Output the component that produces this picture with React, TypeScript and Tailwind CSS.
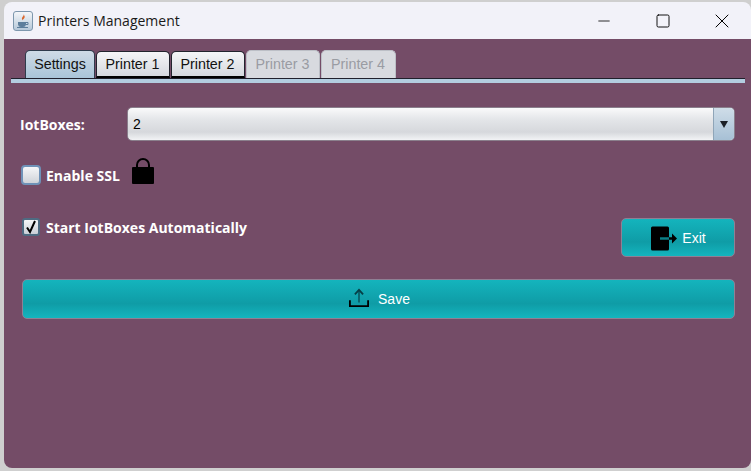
import { X, Minus, Square } from 'lucide-react';

const tabs = ['Printer 1', 'Printer 2'];
const disabledTabs = ['Printer 3', 'Printer 4'];
const tealButton =
  'flex items-center justify-center rounded-[5px] border border-[#8f8094] bg-[linear-gradient(#14b4bd_0%,#0f9ca6_62%,#14b5be_100%)] font-["Liberation_Sans",sans-serif] text-[14px] text-white';
const labelText = 'font-["Open_Sans",sans-serif] text-[14px] font-bold text-white';

function JavaIcon() {
  return (
    <div className="flex h-[20px] w-[20px] items-center justify-center rounded-[3px] border border-[#7d97ad] bg-[linear-gradient(#f4f6f9,#b6c8d9)]">
      <svg width="14" height="16" viewBox="0 0 14 16">
        <path d="M7.500 1c1 2-2 3-1.500 5 .2.8 1 1.300 1 1.300-.3-1.300 2.500-2.300 1.500-4.300" fill="#d9662b" />
        <path d="M2 9h8v2.500a3 3 0 0 1-3 2.500H5a3 3 0 0 1-3-2.500z" fill="#5d7e9c" />
        <path d="M10 9.500h2v2h-2M1 14.500h11" fill="none" stroke="#5d7e9c" />
      </svg>
    </div>
  );
}

function LockIcon() {
  return (
    <svg width="24" height="27" viewBox="0 0 24 27">
      <path d="M6 12V7a6 6 0 0 1 12 0v5" fill="none" stroke="#000" strokeWidth="2" />
      <rect x="1" y="9" width="22" height="17" rx="1" fill="#000" />
    </svg>
  );
}

function ExitIcon() {
  return (
    <svg width="29" height="25" viewBox="0 0 29 25">
      <rect x="1" y="0.500" width="18" height="24" rx="1.500" fill="#000" />
      <path d="M10 12.500h9" stroke="#0b7f86" strokeWidth="2.500" />
      <path d="M19 12.500h6" stroke="#000" strokeWidth="2.500" />
      <path d="M22 7.500l5 5-5 5z" fill="#000" />
    </svg>
  );
}

function UploadIcon() {
  return (
    <svg width="20" height="20" viewBox="0 0 22 22">
      <path d="M1 13.500v6.500h20v-6.500" fill="none" stroke="#000" strokeWidth="2" />
      <path d="M11 16V3" stroke="#0a5f68" strokeWidth="2" />
      <path d="M6.500 7L11 2l4.500 5" fill="none" stroke="#063f46" strokeWidth="2" />
    </svg>
  );
}

export default function App() {
  return (
    <div className="flex h-[471px] w-[751px] flex-col overflow-hidden bg-[#cfcfcf] pb-[3px] pl-[4px] pt-[2px]">
      <div className="flex min-h-0 flex-1 flex-col overflow-hidden rounded-[8px]">
        {/* title bar */}
        <div className="flex h-[37px] shrink-0 items-center bg-[#f2f2f9] pl-[9px]">
          <JavaIcon />
          <span className='ml-[5px] font-["Open_Sans",sans-serif] text-[14px] text-[#1a1a1a]'>Printers Management</span>
          <div className="ml-auto flex items-center text-black">
            <div className="flex w-[59px] justify-center"><Minus size={18} strokeWidth={1.100} /></div>
            <div className="flex w-[59px] justify-center"><Square size={16} strokeWidth={1.400} /></div>
            <div className="flex w-[59px] justify-center"><X size={24} strokeWidth={1} /></div>
          </div>
        </div>

        <div className="flex min-h-0 flex-1 flex-col bg-[#744c67] pr-[6px]">
          {/* tabs */}
          <div className="ml-[7px] mt-[11px] flex h-[28px] items-end pl-[14px] font-['Liberation_Sans',sans-serif] text-[14.300px]">
            <div className="flex h-[28px] w-[70px] items-center justify-center rounded-t-[5px] border border-b-0 border-[#2f3b4c] bg-[linear-gradient(#cfdbe6,#a9c4d8)] text-[#111]">Settings</div>
            {tabs.map((t) => (
              <div key={t} className="ml-[1px] flex h-[27px] w-[74px] items-center justify-center rounded-t-[5px] border-x border-t border-[#22242e] border-b-2 border-b-black bg-[linear-gradient(#f5f6f8,#d5d8de)] pr-[1px] pt-[2px] text-[#111]">{t}</div>
            ))}
            {disabledTabs.map((t) => (
              <div key={t} className="ml-[1px] flex h-[28px] w-[74px] items-center justify-center rounded-t-[5px] border-x border-t border-[#bcbfc6] bg-[#d8dadf] pr-[1px] text-[#9a9ca3] last:w-[75px]">{t}</div>
            ))}
          </div>
          <div className="ml-[7px] h-[5px] shrink-0 border-t border-[#20202c] bg-[#b3cde0]" />

          {/* form */}
          <div className="flex flex-col pl-[16px] pr-[4px]">
            <div className="mt-[24px] flex items-center pr-[6px]">
              <span className={`w-[107px] ${labelText}`}>IotBoxes:</span>
              <div className="flex h-[34px] flex-1 overflow-hidden rounded-[5px] border border-[#8a7f8c] bg-[linear-gradient(#fafafb,#e4e6e9_35%,#d6d8dc_75%,#f2f3f5)]">
                <span className="flex flex-1 items-center pl-[5px] font-['Liberation_Sans',sans-serif] text-[14px] text-black">2</span>
                <div className="flex w-[21px] items-center justify-center border-l border-[#8fa5b8] bg-[linear-gradient(#cfdde8,#a7c0d5)]">
                  <svg width="10" height="9" viewBox="0 0 10 9"><path d="M1 1h8L5 8z" fill="#1c2026" /></svg>
                </div>
              </div>
            </div>

            <div className="mt-[20px] flex h-[28px] items-center pl-[1px]">
              <div className="h-[20px] w-[20px] rounded-[4px] border-2 border-[#6f92b8] bg-[linear-gradient(#f5f6f8,#cfd3d9)]" />
              <span className={`ml-[5px] ${labelText}`}>Enable SSL</span>
              <div className="ml-[11px] -mt-[7px]"><LockIcon /></div>
            </div>

            <div className="mt-[29px] flex items-start pl-[2px] pr-[6px]">
              <div className="flex h-[18px] w-[18px] items-center justify-center rounded-[3px] border-2 border-[#4e6b82] bg-[linear-gradient(#f5f6f8,#c9ced6)]">
                <svg width="12" height="14" viewBox="0 0 12 14"><path d="M2 7.500l3 4.500L10 1" fill="none" stroke="#000" strokeWidth="2" /></svg>
              </div>
              <span className={`ml-[6px] leading-[20px] ${labelText}`}>Start IotBoxes Automatically</span>
              <button className={`ml-auto h-[39px] w-[114px] gap-[3px] pt-[2px] ${tealButton}`}>
                <ExitIcon />
                <span>Exit</span>
              </button>
            </div>

            <button className={`ml-[2px] mr-[6px] mt-[22px] h-[40px] gap-[9px] pl-[2px] pt-[1px] ${tealButton}`}>
              <span className="mb-[3px]"><UploadIcon /></span>
              <span>Save</span>
            </button>
          </div>
        </div>
      </div>
    </div>
  );
}
